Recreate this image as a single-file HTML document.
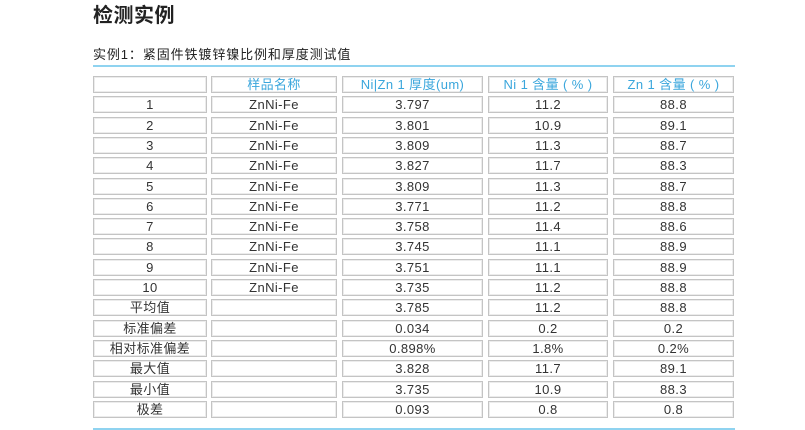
<!DOCTYPE html>
<html><head><meta charset="utf-8"><style>
body{margin:0;width:805px;height:430px;background:#fff;position:relative;overflow:hidden;font-family:"Liberation Sans","Noto Sans CJK SC",sans-serif;color:#333}
.t{position:absolute;left:93px;top:-1px;font-size:20px;font-weight:bold;color:#222;letter-spacing:0.5px}
.s{position:absolute;left:93px;top:44px;font-size:13px;color:#222;letter-spacing:0.9px}
.line{position:absolute;left:93px;width:642px;height:2px;background:#8fd3f0}
.c{position:absolute;height:15px;border:1px solid #c4c4c4;box-shadow:inset 0 0 0 1px #ececec;font-size:13px;line-height:16px;text-align:center;color:#333;letter-spacing:0.4px}
.h{color:#3aa6dc}
</style></head><body>
<div class="t">检测实例</div>
<div class="s">实例1：紧固件铁镀锌镍比例和厚度测试值</div>
<div class="line" style="top:65px"></div>
<div class="line" style="top:428px"></div>
<div id="g"></div>
<script>
var cols=[[93,114],[211,126],[342,141],[488,120],[613,121]];
var rows=[["","样品名称","Ni|Zn 1 厚度(um)","Ni 1 含量 ( % )","Zn 1 含量 ( % )"],
["1","ZnNi-Fe","3.797","11.2","88.8"],["2","ZnNi-Fe","3.801","10.9","89.1"],["3","ZnNi-Fe","3.809","11.3","88.7"],["4","ZnNi-Fe","3.827","11.7","88.3"],["5","ZnNi-Fe","3.809","11.3","88.7"],["6","ZnNi-Fe","3.771","11.2","88.8"],["7","ZnNi-Fe","3.758","11.4","88.6"],["8","ZnNi-Fe","3.745","11.1","88.9"],["9","ZnNi-Fe","3.751","11.1","88.9"],["10","ZnNi-Fe","3.735","11.2","88.8"],
["平均值","","3.785","11.2","88.8"],["标准偏差","","0.034","0.2","0.2"],["相对标准偏差","","0.898%","1.8%","0.2%"],["最大值","","3.828","11.7","89.1"],["最小值","","3.735","10.9","88.3"],["极差","","0.093","0.8","0.8"]];
var h="";
rows.forEach(function(r,i){var top=76+i*20.3;r.forEach(function(v,j){h+='<div class="c'+(i==0?' h':'')+'" style="left:'+cols[j][0]+'px;top:'+top.toFixed(1)+'px;width:'+(cols[j][1]-2)+'px">'+v+'</div>';});});
document.getElementById("g").innerHTML=h;
</script>
</body></html>
